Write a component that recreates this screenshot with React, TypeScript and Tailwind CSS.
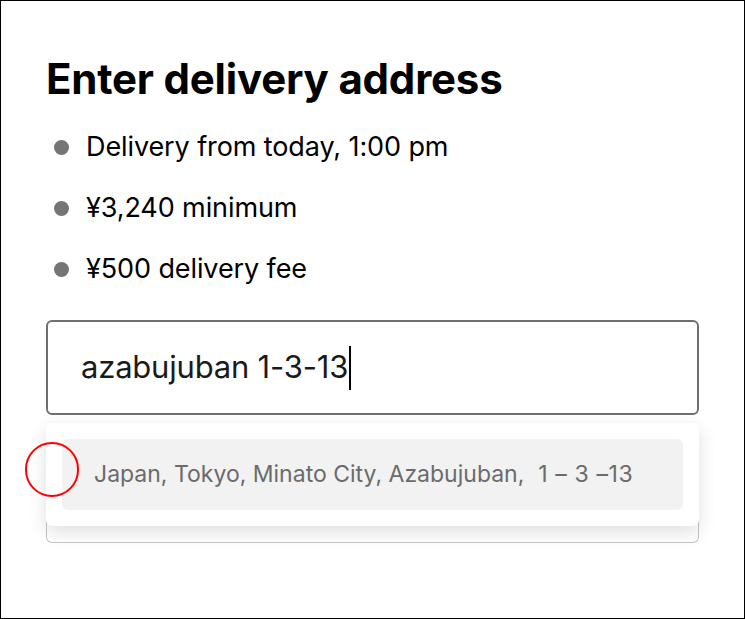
import React from 'react';

const items = ['Delivery from today, 1:00 pm', '¥3,240 minimum', '¥500 delivery fee'];

export default function App() {
  return (
    <div
      className="w-[745px] h-[619px] border border-black bg-white text-black"
      style={{ fontFamily: 'Inter, "Noto Sans", sans-serif' }}
    >
      <div className="px-[45px] pt-[54px]">
        <h1 className="text-[42px] leading-[48px] font-bold tracking-[-0.2px]">Enter delivery address</h1>

        <ul className="mt-[26px] flex flex-col gap-[25px]">
          {items.map((item) => (
            <li key={item} className="flex items-center h-[36px]">
              <span className="ml-[8px] mr-[17px] w-[15px] h-[15px] rounded-full bg-[#757575]" />
              <span className="text-[27px] leading-[36px] tracking-[-0.1px]">{item}</span>
            </li>
          ))}
        </ul>

        {/* Address input */}
        <div className="relative mt-[33px]">
          <div className="h-[95px] rounded-[6px] border-2 border-[#6f6f6f] flex items-center pl-[33px]">
            <span className="text-[31px] tracking-[-0.2px] text-[#1a1a1a]">azabujuban 1-3-13</span>
            <span className="ml-[1px] w-[2px] h-[44px] bg-black" />
          </div>

          {/* box peeking under the suggestion list */}
          <div className="mt-[40px] h-[88px] rounded-b-[6px] border border-t-0 border-[#c6c6c6]" />

          {/* Suggestion dropdown */}
          <div className="absolute left-0 right-0 top-[103px] rounded-[6px] bg-white shadow-[0_6px_18px_rgba(0,0,0,0.13)] p-[16px]">
            <div className="h-[71px] rounded-[6px] bg-[#f2f2f2] flex items-center pl-[32px]">
              <span className="text-[23px] text-[#6b6b6b]">
                Japan, Tokyo, Minato City, Azabujuban,
                <span className="ml-[14px] tracking-[0.6px]">1 – 3 –13</span>
              </span>
            </div>
          </div>

          {/* red annotation circle */}
          <div className="absolute left-[-21px] top-[122px] w-[54px] h-[55px] rounded-full border-2 border-[#ff0000]" />
        </div>
      </div>
    </div>
  );
}
